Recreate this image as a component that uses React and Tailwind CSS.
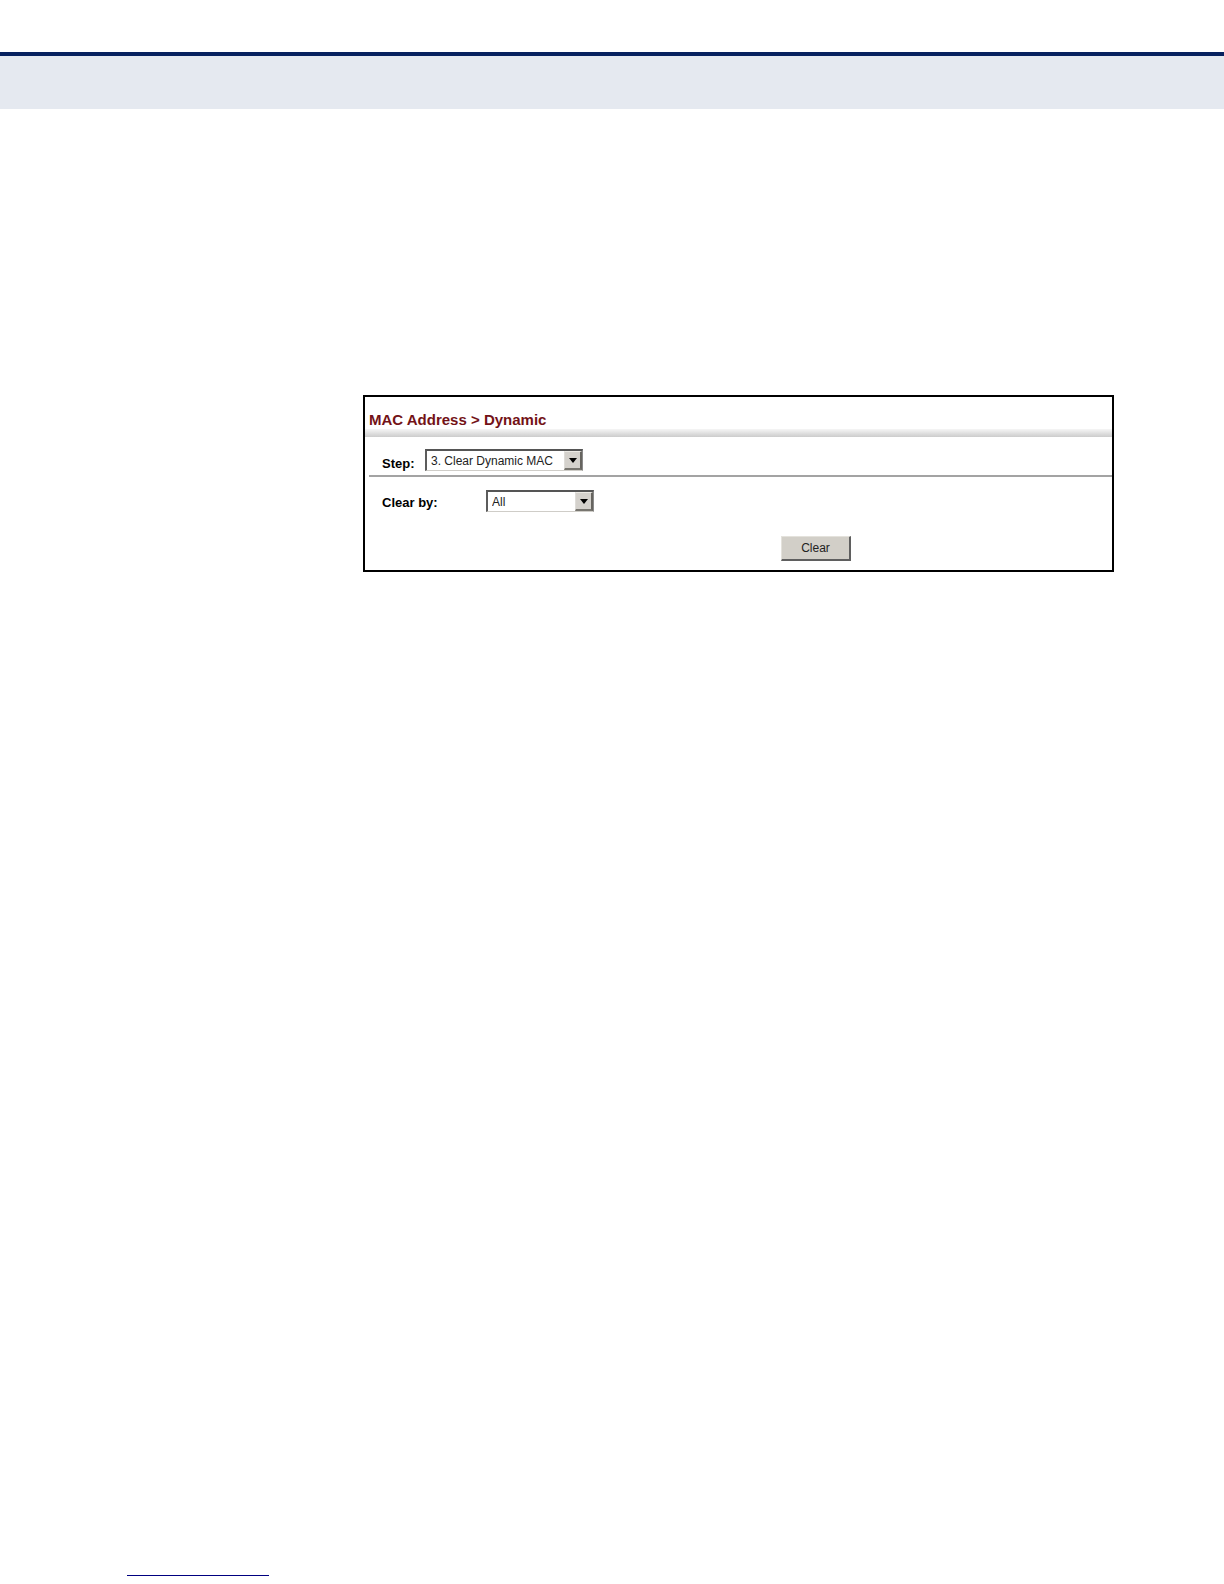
const STEPS = ['3. Clear Dynamic MAC', '1. Configure Aging', '2. Show Dynamic MAC']
const CLEAR_BY = ['All', 'MAC Address', 'VLAN', 'Interface']

function SelectBox({ id, options, className }) {
  return (
    <div className={`relative ${className}`}>
      <select
        id={id}
        className="block w-full h-[22px] appearance-none rounded-none bg-white border-t-2 border-l-2 border-r border-b border-t-[#555555] border-l-[#5c5c5c] border-r-[#8a8a8a] border-b-[#cfcdc8] pl-1 pr-5 text-xs text-[#222222]"
      >
        {options.map(option => (
          <option key={option}>{option}</option>
        ))}
      </select>
      <span className="pointer-events-none absolute top-[2px] right-px bottom-px w-[18px] flex items-center justify-center bg-[#d4d1cc] border-r-2 border-b-2 border-r-[#66645f] border-b-[#77756f] border-t border-l border-t-[#eceae5] border-l-[#dedcd8]">
        <svg width="8" height="5" viewBox="0 0 8 5" aria-hidden="true">
          <path d="M0 0h8L4 5z" fill="#000" />
        </svg>
      </span>
    </div>
  )
}

export default function App() {
  return (
    <div className="min-h-screen flex flex-col bg-white font-['Liberation_Sans',Arial,sans-serif] text-black">
      <header className="mt-[52px] h-[57px] border-t-4 border-[#07215f] bg-[#e5e9f0]" />

      <main className="pt-[286px] pl-[363px] pr-[110px]">
        <section className="border-2 border-black pb-[9px]">
          <h1 className="pt-[13px] pl-1 h-8 text-[15px] leading-[20px] font-bold text-[#731217]">MAC Address &gt; Dynamic</h1>
          <div className="h-2 bg-linear-to-b from-[#f6f6f6] to-[#cccccc]" />

          <div className="ml-1 pl-[13px] pt-3 flex items-start h-10 border-b-2 border-[#a3a3a3]">
            <label htmlFor="step" className="w-[43px] pt-[5px] text-[13px] leading-[20px] font-bold">Step:</label>
            <SelectBox id="step" options={STEPS} className="w-[158px]" />
          </div>

          <div className="pl-[17px] pt-[13px] flex items-start">
            <label htmlFor="clear-by" className="w-[104px] pt-[3px] text-[13px] leading-[20px] font-bold">Clear by:</label>
            <SelectBox id="clear-by" options={CLEAR_BY} className="w-[108px]" />
          </div>

          <div className="pl-[416px] pt-[23px] flex">
            <button
              type="button"
              className="w-[70px] h-[25px] bg-[#d2cfc8] border border-t-[#e4e2dc] border-l-[#e4e2dc] border-r-2 border-b-2 border-r-[#5f5f5f] border-b-[#5f5f5f] text-xs text-[#222222]"
            >
              Clear
            </button>
          </div>
        </section>
      </main>

      <footer className="mt-auto pl-[127px] pb-2">
        <div className="w-[142px] border-t border-[#000080]" />
      </footer>
    </div>
  )
}
